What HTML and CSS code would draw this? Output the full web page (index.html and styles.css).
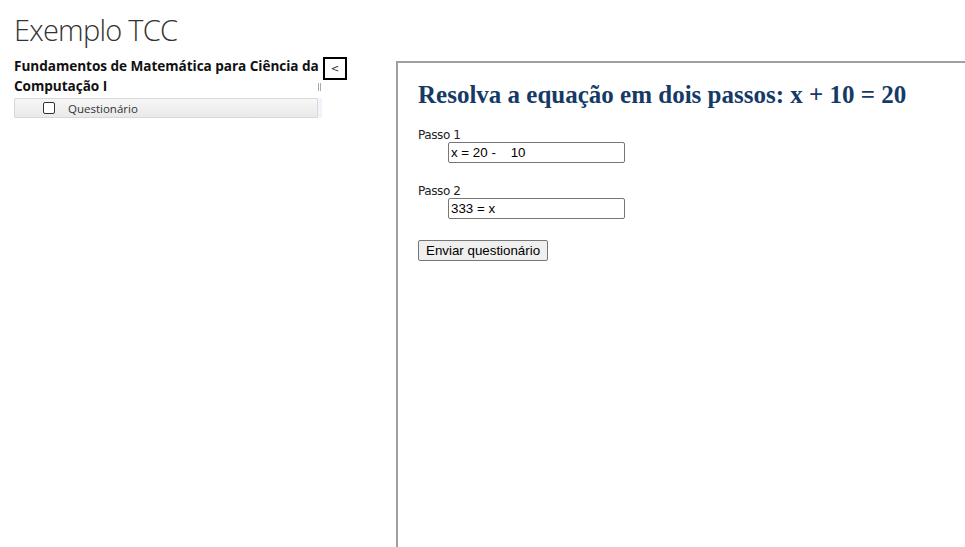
FILE: index.html
```html
<!DOCTYPE html>
<html lang="pt">
<head>
<meta charset="utf-8">
<title>Exemplo TCC</title>
<link rel="stylesheet" href="styles.css">
</head>
<body>
<h1 class="site-title">Exemplo TCC</h1>
<div class="layout">
  <aside class="sidebar">
    <div class="course-row">
      <h3 class="course-title">Fundamentos de Matemática para Ciência da Computação I</h3>
      <button class="collapse-btn" type="button">&lt;</button>
    </div>
    <div class="menu">
      <div class="menu-item">
        <span class="check"></span>
        <span class="menu-label">Questionário</span>
      </div>
      <span class="grip"></span>
    </div>
  </aside>
  <main class="frame">
    <h2 class="question">Resolva a equação em dois passos: x + 10 = 20</h2>
    <form class="quiz">
      <label class="step">
        <span class="step-label">Passo 1</span>
        <input class="step-input" type="text" value="x = 20 -    10">
      </label>
      <label class="step">
        <span class="step-label">Passo 2</span>
        <input class="step-input" type="text" value="333 = x">
      </label>
      <button class="submit" type="button">Enviar questionário</button>
    </form>
  </main>
</div>
</body>
</html>
```

FILE: styles.css
```css
html, body {
  margin: 0;
  padding: 0;
  background: #fff;
  overflow: hidden;
  height: 100%;
}
body {
  font-family: "Open Sans", "DejaVu Sans", sans-serif;
  color: #222;
}
.site-title {
  margin: 0;
  padding: 8px 0 0 14px;
  font-family: "Open Sans", sans-serif;
  font-weight: 300;
  font-size: 29px;
  line-height: 44px;
  color: #333;
  letter-spacing: -0.75px;
}
.layout {
  display: flex;
  align-items: flex-start;
  padding-left: 14px;
  margin-top: 4px;
  height: calc(100% - 56px);
}
.sidebar {
  width: 334px;
  flex: none;
}
.course-row {
  display: flex;
  align-items: flex-start;
}
.course-title {
  margin: 0;
  width: 308px;
  font-size: 13.6px;
  font-weight: 700;
  line-height: 20px;
  color: #111;
  letter-spacing: -0.05px;
}
.collapse-btn {
  width: 24px;
  height: 23px;
  margin: 1px 0 0 1px;
  padding: 0;
  border: 2px solid #000;
  background: #fff;
  font-family: "DejaVu Sans", sans-serif;
  font-size: 10px;
  line-height: 18px;
  color: #333;
}
.menu {
  position: relative;
  width: 308px;
  margin-top: 2px;
}
.menu-item {
  display: flex;
  align-items: center;
  height: 20px;
  box-sizing: border-box;
  width: 304px;
  border: 1px solid #d8d8d8;
  border-radius: 1px;
  background: linear-gradient(#f7f7f7, #e9e9e9);
  padding-left: 28px;
}
.menu::after {
  content: "";
  position: absolute;
  right: 0;
  top: 0;
  width: 4px;
  height: 20px;
  background: #f1f4fb;
}
.check {
  width: 10px;
  height: 10px;
  border: 1px solid #333;
  border-radius: 2px;
  background: #fff;
}
.menu-label {
  margin-left: 13px;
  font-size: 11.5px;
  color: #333;
}
.grip {
  position: absolute;
  right: 1px;
  top: -15px;
  width: 3px;
  height: 8px;
  background-image: linear-gradient(90deg, #888 1px, transparent 1px), linear-gradient(#fff 1px, transparent 1px);
  background-size: 2px 2px, 2px 2px;
  opacity: 0.7;
}
.frame {
  flex: 1;
  align-self: stretch;
  margin-left: 48px;
  margin-top: 5px;
  border: 2px solid #a0a0a0;
  border-right: 0;
  border-bottom: 0;
  padding: 0 20px;
  box-sizing: border-box;
  background: #fff;
}
.question {
  margin: 17px 0 0;
  font-family: "Liberation Serif", serif;
  font-weight: 700;
  font-size: 25px;
  line-height: 30px;
  color: #153a66;
}
.quiz {
  display: flex;
  flex-direction: column;
  align-items: flex-start;
  margin-top: 18px;
}
.step {
  display: flex;
  flex-direction: column;
  margin-bottom: 21px;
}
.step-label {
  font-family: "DejaVu Sans", sans-serif;
  font-size: 12px;
  line-height: 14px;
  color: #222;
  letter-spacing: -0.4px;
}
.step-input {
  margin-left: 30px;
  width: 177px;
  height: 21px;
  box-sizing: border-box;
  border: 1px solid #767676;
  border-radius: 2px;
  padding: 0 2px;
  font-family: "Liberation Sans", sans-serif;
  font-size: 13.33px;
  color: #000;
  white-space: pre;
}
.submit {
  height: 21px;
  padding: 0 7px;
  margin-top: 0;
  border: 1px solid #767676;
  border-radius: 2px;
  background: #efefef;
  font-family: "Liberation Sans", sans-serif;
  font-size: 13.33px;
  color: #000;
}
```
